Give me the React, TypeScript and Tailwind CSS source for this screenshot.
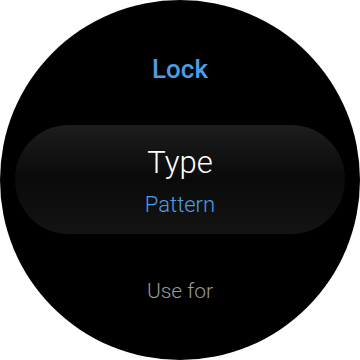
const App = () => {
  return (
    <div className="w-[360px] h-[360px] bg-white">
      <div
        className="w-[360px] h-[360px] rounded-full bg-black flex flex-col items-center overflow-hidden"
        style={{ fontFamily: "Roboto, 'Open Sans', sans-serif" }}
      >
        <div className="mt-[54px] text-[26px] leading-[30px] font-medium text-[#4a9de6]">
          Lock
        </div>
        <div className="mt-[41px] w-[330px] h-[109px] rounded-[54px] bg-linear-to-b from-[#1d1d1d] via-[#0a0a0a] to-[#141414] flex flex-col items-center pt-[20px]">
          <div className="text-[31px] leading-[36px] font-light text-white">
            Type
          </div>
          <div className="mt-[11px] text-[22px] leading-[26px] font-light text-[#4a9de6]">
            Pattern
          </div>
        </div>
        <div className="mt-[45px] text-[21px] leading-[24px] font-light text-[#9a9a9a]">
          Use for
        </div>
      </div>
    </div>
  );
};

export default App;
